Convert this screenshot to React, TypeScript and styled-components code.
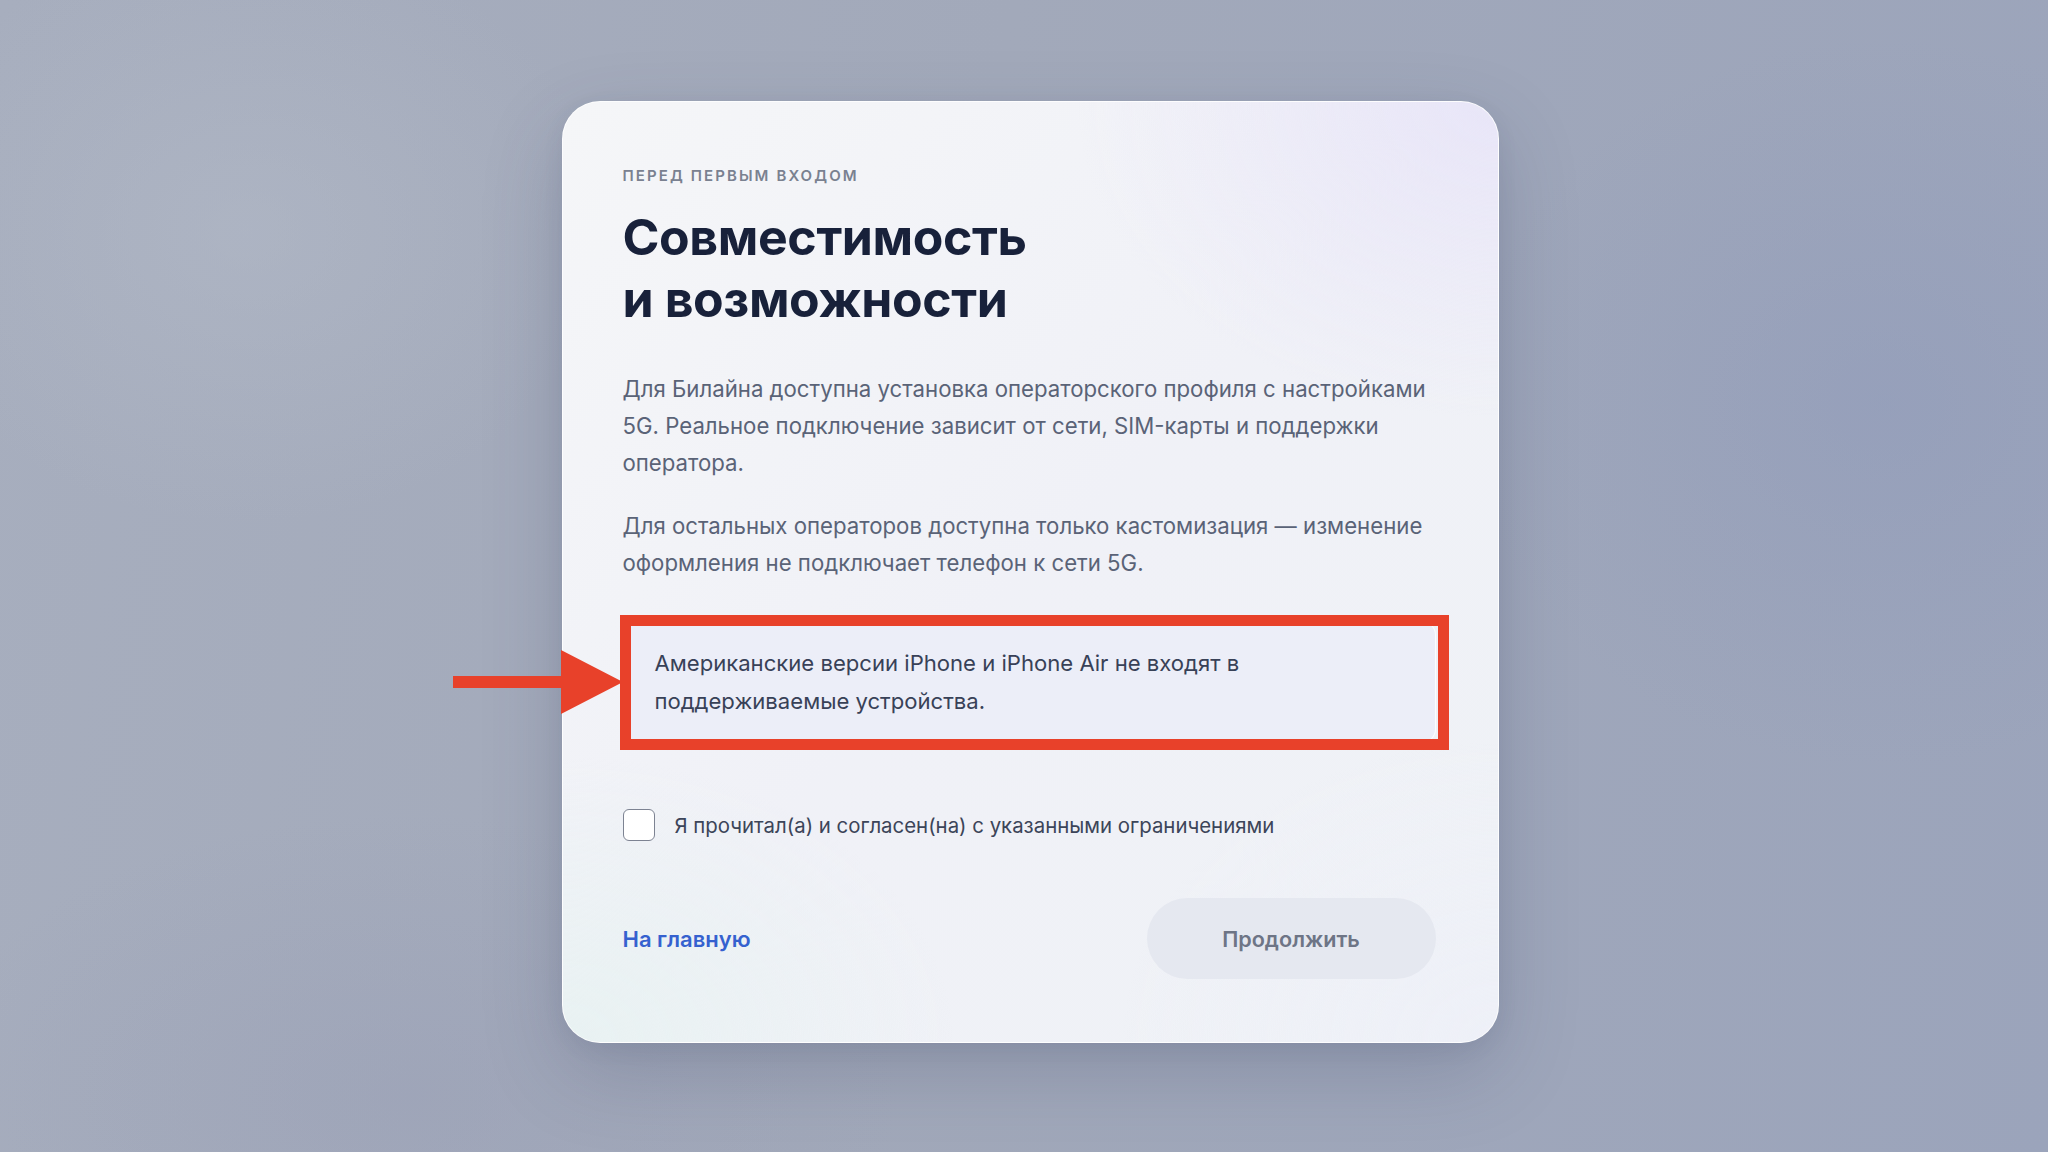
import React, { FC, useState } from 'react'
import styled, { createGlobalStyle } from 'styled-components'

//CSS
const GlobalStyle = createGlobalStyle`
    html, body {
        margin: 0;
        padding: 0;
    }
    body {
        font-family: Inter, "Noto Sans", "Liberation Sans", sans-serif;
        -webkit-font-smoothing: antialiased;
    }
    * {
        box-sizing: border-box;
    }
`
const StyledPage = styled.main`
    display: flex;
    align-items: center;
    justify-content: center;
    width: 100%;
    min-height: 100vh;
    padding: 0 0 8px 12px;
    background:
        radial-gradient(ellipse 520px 420px at 12% 20%, rgba(182, 189, 202, 0.45), transparent 70%),
        radial-gradient(ellipse 600px 520px at 92% 35%, rgba(140, 152, 186, 0.4), transparent 70%),
        radial-gradient(ellipse 700px 400px at 20% 95%, rgba(150, 156, 180, 0.4), transparent 70%),
        linear-gradient(100deg, #a7aebe 0%, #a2a9ba 45%, #9ba4bb 100%);
`
const StyledCard = styled.section`
    display: flex;
    flex-direction: column;
    width: 937px;
    padding: 64px 62px 63px 60px;
    border-radius: 38px;
    border: 1.5px solid rgba(255, 255, 255, 0.85);
    background:
        radial-gradient(ellipse 560px 420px at 100% 0%, rgba(232, 229, 248, 0.95), transparent 75%),
        radial-gradient(ellipse 520px 380px at 0% 100%, rgba(232, 242, 242, 0.95), transparent 75%),
        radial-gradient(ellipse 500px 400px at 100% 100%, rgba(238, 240, 248, 0.9), transparent 75%),
        linear-gradient(135deg, #f5f6f8 0%, #f0f1f7 50%, #eff2f6 100%);
    box-shadow: 0 30px 80px rgba(55, 64, 96, 0.22), 0 6px 20px rgba(55, 64, 96, 0.08);
`
const StyledEyebrow = styled.p`
    margin: 0;
    font-size: 15px;
    line-height: 20px;
    font-weight: 600;
    letter-spacing: 2.1px;
    text-transform: uppercase;
    color: #7a8190;
`
const StyledH1 = styled.h1`
    margin: 20px 0 0;
    font-size: 50px;
    line-height: 62px;
    font-weight: 700;
    letter-spacing: -0.4px;
    color: #18213a;
`
const StyledP = styled.p<{ $gap: number }>`
    margin: ${({ $gap }) => $gap}px 0 0;
    font-size: 22.2px;
    line-height: 37px;
    font-weight: 400;
    color: #5a6377;
`
const StyledNotice = styled.div`
    position: relative;
    margin-top: 40px;
    padding: 22px 31px;
    border-radius: 14px;
    border: 1.5px solid rgba(255, 255, 255, 0.9);
    background: #eceef8;
    font-size: 22.1px;
    line-height: 38px;
    color: #384157;
    // red frame drawn over the notice
    &::after {
        content: '';
        position: absolute;
        top: -7px;
        bottom: -8px;
        left: -4px;
        right: -14px;
        border: 11px solid #e8412a;
        pointer-events: none;
    }
`
const StyledArrow = styled.svg`
    position: absolute;
    top: 50%;
    left: -171px;
    width: 170px;
    height: 64px;
    transform: translateY(-50%);
`
const StyledCheckRow = styled.label`
    display: flex;
    align-items: center;
    gap: 20px;
    margin-top: 66px;
    font-size: 20.4px;
    color: #3c4559;
    cursor: pointer;
`
const StyledCheckbox = styled.span<{ $checked: boolean }>`
    display: flex;
    align-items: center;
    justify-content: center;
    width: 32px;
    height: 32px;
    border-radius: 6px;
    border: 1.5px solid #7d8392;
    background: ${({ $checked }) => ($checked ? '#3561d0' : '#ffffff')};
    color: #fff;
`
const StyledFooter = styled.div`
    display: flex;
    align-items: center;
    justify-content: space-between;
    margin-top: 57px;
`
const StyledLink = styled.a`
    font-size: 22px;
    font-weight: 600;
    color: #3561cf;
    text-decoration: none;
    cursor: pointer;
`
const StyledButton = styled.button<{ $enabled: boolean }>`
    width: 289px;
    height: 81px;
    border: 0;
    border-radius: 41px;
    font-family: inherit;
    font-size: 21.6px;
    font-weight: 600;
    background-color: ${({ $enabled }) => ($enabled ? '#3561d0' : '#e5e8f0')};
    color: ${({ $enabled }) => ($enabled ? '#ffffff' : '#6e7586')};
    cursor: ${({ $enabled }) => ($enabled ? 'pointer' : 'default')};
`

const App: FC = () => {
    const [agreed, setAgreed] = useState(false)

    return (
        <React.Fragment>
            <GlobalStyle />
            <StyledPage>
                <StyledCard>
                    <StyledEyebrow>Перед первым входом</StyledEyebrow>
                    <StyledH1>
                        Совместимость
                        <br />
                        и возможности
                    </StyledH1>
                    <StyledP $gap={40}>
                        Для Билайна доступна установка операторского профиля с настройками 5G. Реальное
                        подключение зависит от сети, SIM-карты и поддержки оператора.
                    </StyledP>
                    <StyledP $gap={26}>
                        Для остальных операторов доступна только кастомизация — изменение оформления не
                        подключает телефон к сети 5G.
                    </StyledP>
                    <StyledNotice>
                        <StyledArrow viewBox="0 0 170 64">
                            <rect x="0" y="26" width="112" height="12" fill="#e8412a" />
                            <polygon points="108,0 170,32 108,64" fill="#e8412a" />
                        </StyledArrow>
                        Американские версии iPhone и iPhone Air не входят в
                        <br />
                        поддерживаемые устройства.
                    </StyledNotice>
                    <StyledCheckRow onClick={() => setAgreed(!agreed)}>
                        <StyledCheckbox $checked={agreed}>
                            {agreed && (
                                <svg width="18" height="18" viewBox="0 0 24 24" fill="none" stroke="currentColor" strokeWidth="3">
                                    <path d="M5 12l5 5 9-10" />
                                </svg>
                            )}
                        </StyledCheckbox>
                        Я прочитал(а) и согласен(на) с указанными ограничениями
                    </StyledCheckRow>
                    <StyledFooter>
                        <StyledLink>На главную</StyledLink>
                        <StyledButton $enabled={agreed} disabled={!agreed}>
                            Продолжить
                        </StyledButton>
                    </StyledFooter>
                </StyledCard>
            </StyledPage>
        </React.Fragment>
    )
}
export default App
